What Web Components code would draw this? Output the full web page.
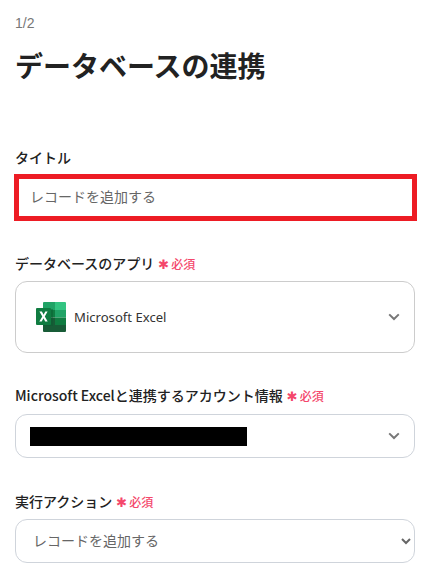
<!DOCTYPE html>
<html lang="ja">
<head>
<meta charset="utf-8">
<title>データベースの連携</title>
<style>
  html, body { margin: 0; background: #fff; }
  body {
    font-family: "Noto Sans CJK JP", "Noto Sans", sans-serif;
    color: #222;
    overflow: hidden;
    height: 574px;
  }
</style>
</head>
<body>
<step-form step="1/2" heading="データベースの連携">
  <form-field label="タイトル" style="--label-gap:7px">
    <title-box>レコードを追加する</title-box>
  </form-field>
  <form-field label="データベースのアプリ" required style="margin-top:32px;--label-gap:8px">
    <app-select>
      <excel-icon></excel-icon>
      <span>Microsoft Excel</span>
    </app-select>
  </form-field>
  <form-field label="Microsoft Excelと連携するアカウント情報" required style="margin-top:32px;--label-gap:9px">
    <account-select></account-select>
  </form-field>
  <form-field label="実行アクション" required style="margin-top:33px;--label-gap:8px">
    <action-select></action-select>
  </form-field>
</step-form>

<script>
// ページ全体
class StepForm extends HTMLElement {
  constructor() {
    super();
    this.attachShadow({ mode: 'open' });
  }
  connectedCallback() {
    this.shadowRoot.innerHTML = `
      <style>
        :host { display: block; padding: 14px 18px 0 15px; }
        .step { font-size: 14px; line-height: 18px; color: #777; font-family: "Liberation Sans", sans-serif; }
        h1 {
          margin: 14px 0 0;
          font-size: 28px;
          line-height: 38px;
          font-weight: 700;
          color: #222;
        }
        .fields { display: block; margin-top: 63px; }
      </style>
      <div class="step">${this.getAttribute('step')}</div>
      <h1>${this.getAttribute('heading')}</h1>
      <div class="fields"><slot></slot></div>
    `;
  }
}

// ラベル + 入力欄
class FormField extends HTMLElement {
  constructor() {
    super();
    this.attachShadow({ mode: 'open' });
  }
  connectedCallback() {
    const req = this.hasAttribute('required')
      ? `<span class="star">✱</span><span class="req">必須</span>` : '';
    this.shadowRoot.innerHTML = `
      <style>
        :host { display: block; }
        .label {
          display: flex;
          align-items: center;
          height: 20px;
          font-size: 14px;
          font-weight: 500;
          color: #222;
          margin-bottom: var(--label-gap, 8px);
          white-space: nowrap;
        }
        .star {
          color: #f4476b;
          font-size: 13px;
          margin-left: 4px;
          line-height: 20px;
          font-family: "DejaVu Sans", sans-serif;
          position: relative;
          top: 2px;
        }
        .req { color: #f4476b; font-size: 12px; font-weight: 500; margin-left: 2px; }
      </style>
      <div class="label"><span>${this.getAttribute('label')}</span>${req}</div>
      <slot></slot>
    `;
  }
}

// 赤枠のタイトル入力
class TitleBox extends HTMLElement {
  constructor() {
    super();
    this.attachShadow({ mode: 'open' });
  }
  connectedCallback() {
    this.shadowRoot.innerHTML = `
      <style>
        :host {
          display: flex;
          align-items: center;
          box-sizing: border-box;
          width: 403px;
          height: 47px;
          margin-left: -1px;
          padding: 0 0 4px 11px;
          border: 5px solid #ed1c24;
          font-size: 14px;
          color: #666;
        }
      </style>
      <slot></slot>
    `;
  }
}

const chevron = `<svg width="12" height="8" viewBox="0 0 12 8"><path d="M1.2 1.4 6 6 10.8 1.4" fill="none" stroke="#777" stroke-width="2"/></svg>`;

// アプリ選択
class AppSelect extends HTMLElement {
  constructor() {
    super();
    this.attachShadow({ mode: 'open' });
  }
  connectedCallback() {
    this.shadowRoot.innerHTML = `
      <style>
        :host {
          display: flex;
          align-items: center;
          gap: 8px;
          box-sizing: border-box;
          width: 400px;
          height: 72px;
          padding: 0 14px 0 20px;
          border: 1px solid #ccc;
          border-radius: 12px;
          font-family: "Noto Sans", sans-serif;
          font-size: 13.1px;
          color: #333;
        }
        .arrow { margin-left: auto; display: flex; }
      </style>
      <slot></slot>
      <span class="arrow">${chevron}</span>
    `;
  }
}

// Excel のロゴ
class ExcelIcon extends HTMLElement {
  constructor() {
    super();
    this.attachShadow({ mode: 'open' });
  }
  connectedCallback() {
    this.shadowRoot.innerHTML = `
      <style>:host { display: flex; }</style>
      <svg width="30" height="30" viewBox="0 0 30 30">
        <path d="M8 0H19V8H7V1Q7 0 8 0Z" fill="#21a366"/>
        <path d="M19 0H29Q30 0 30 1V8H19Z" fill="#33c481"/>
        <rect x="7" y="8" width="12" height="7.5" fill="#107c41"/>
        <rect x="19" y="8" width="11" height="7.5" fill="#21a366"/>
        <rect x="7" y="15.5" width="12" height="7.5" fill="#185c37"/>
        <rect x="19" y="15.5" width="11" height="7.5" fill="#107c41"/>
        <path d="M7 23H30V29Q30 30 29 30H8Q7 30 7 29Z" fill="#185c37"/>
        <rect x="7" y="7" width="10" height="17" fill="#0b5c30" opacity=".45"/>
        <rect x="0" y="6" width="15" height="17" rx="1" fill="#107c41"/>
        <path d="M3.4 9.5H5.9L7.6 12.8 9.3 9.5H11.6L8.8 14.5 11.7 19.5H9.2L7.5 16.2 5.7 19.5H3.3L6.3 14.5Z" fill="#fff"/>
      </svg>
    `;
  }
}

// アカウント選択 (伏せ字)
class AccountSelect extends HTMLElement {
  constructor() {
    super();
    this.attachShadow({ mode: 'open' });
  }
  connectedCallback() {
    this.shadowRoot.innerHTML = `
      <style>
        :host {
          display: flex;
          align-items: center;
          justify-content: space-between;
          box-sizing: border-box;
          width: 400px;
          height: 44px;
          padding: 0 14px 0 14px;
          border: 1px solid #cfd4db;
          border-radius: 12px;
        }
        .mask { width: 217px; height: 19px; background: #000; }
        .arrow { display: flex; }
      </style>
      <div class="mask"></div>
      <span class="arrow">${chevron}</span>
    `;
  }
}

// 実行アクション (ネイティブ select)
class ActionSelect extends HTMLElement {
  constructor() {
    super();
    this.attachShadow({ mode: 'open' });
  }
  connectedCallback() {
    this.shadowRoot.innerHTML = `
      <style>
        :host { display: block; width: 400px; }
        select {
          display: block;
          box-sizing: border-box;
          width: 100%;
          height: 44px;
          padding: 0 0 2px 13px;
          background: #fff;
          border: 1px solid #cfd4db;
          border-radius: 12px;
          font: inherit;
          font-size: 14px;
          color: #666;
          outline: none;
        }
      </style>
      <select><option>レコードを追加する</option></select>
    `;
  }
}

customElements.define('step-form', StepForm);
customElements.define('form-field', FormField);
customElements.define('title-box', TitleBox);
customElements.define('app-select', AppSelect);
customElements.define('excel-icon', ExcelIcon);
customElements.define('account-select', AccountSelect);
customElements.define('action-select', ActionSelect);
</script>
</body>
</html>
